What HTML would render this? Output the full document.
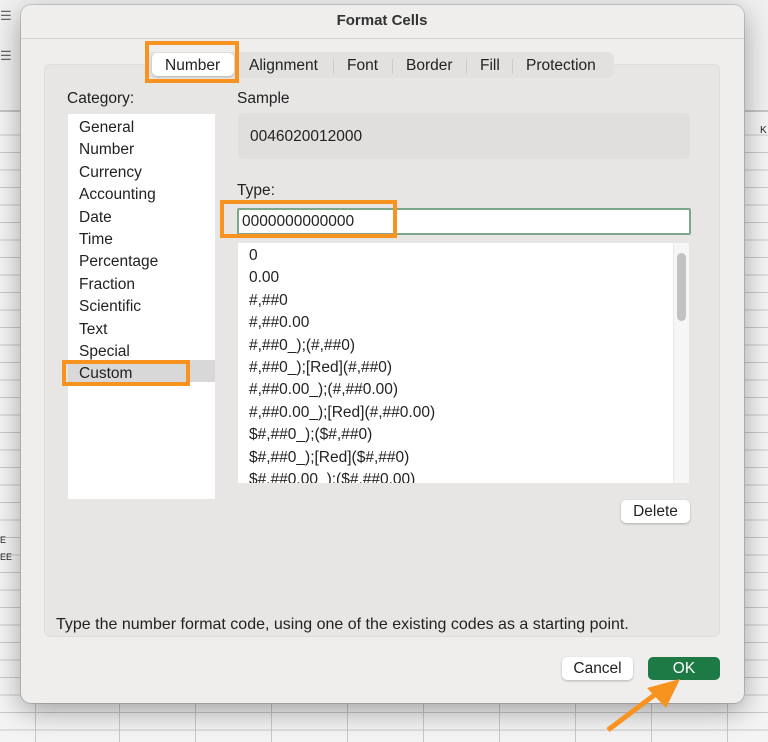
<!DOCTYPE html>
<html><head><meta charset="utf-8"><style>
*{box-sizing:border-box;margin:0;padding:0}
body{width:768px;height:742px;position:relative;overflow:hidden;font-family:"Liberation Sans",sans-serif;color:#222;
background-color:#f4f4f4;
background-image:repeating-linear-gradient(to bottom,transparent 0,transparent 16.5px,#c8c8c8 16.5px,#c8c8c8 17.5px),repeating-linear-gradient(to right,transparent 0,transparent 75px,#c8c8c8 75px,#c8c8c8 76px);
background-position:0 118px,44px 0}
.top{position:absolute;left:0;top:0;width:768px;height:112px;background:#f0f0f0;border-bottom:2px solid #c4c4c4}
.a{position:absolute}
.dlg{left:21px;top:5px;width:723px;height:698px;background:#efeeec;border-radius:10px;box-shadow:0 8px 28px rgba(0,0,0,.35),0 0 0 1px #cfcfcf}
.t{font-size:15.5px}
.ob{position:absolute;border:4px solid #f7931e}
</style></head><body>
<div class="top"></div>
<div class="a" style="left:0;top:8px;font-size:13px;color:#666">☰</div>
<div class="a" style="left:0;top:48px;font-size:13px;color:#666">☰</div>
<div class="a" style="left:0;top:535px;font-size:9px">E</div>
<div class="a" style="left:0;top:552px;font-size:9px">EE</div>
<div class="a" style="left:760px;top:125px;font-size:10px">K</div>
<div class="a dlg"></div>
<div class="a" style="left:21px;top:38px;width:723px;height:1px;background:#d4d3d1"></div>
<div class="a" style="left:0;top:12px;width:764px;text-align:center;font-size:15px;font-weight:bold;color:#333">Format Cells</div>
<div class="a" style="left:44px;top:64px;width:676px;height:573px;background:#e7e6e4;border-radius:6px;border:1px solid #dedddb"></div>
<div class="a" style="left:146px;top:52px;width:468px;height:26px;background:#e2e1df;border-radius:7px"></div>
<div class="a" style="left:152px;top:53px;width:82px;height:23px;background:#fff;border-radius:5px;box-shadow:0 1px 2px rgba(0,0,0,.2)"></div>
<div class="a t" style="left:165px;top:57px">Number</div>
<div class="a t" style="left:249px;top:57px">Alignment</div>
<div class="a" style="left:333px;top:59px;width:1px;height:15px;background:#ccc"></div>
<div class="a t" style="left:347px;top:57px">Font</div>
<div class="a" style="left:392px;top:59px;width:1px;height:15px;background:#ccc"></div>
<div class="a t" style="left:406px;top:57px">Border</div>
<div class="a" style="left:466px;top:59px;width:1px;height:15px;background:#ccc"></div>
<div class="a t" style="left:480px;top:57px">Fill</div>
<div class="a" style="left:512px;top:59px;width:1px;height:15px;background:#ccc"></div>
<div class="a t" style="left:526px;top:57px">Protection</div>
<div class="ob" style="left:145px;top:41px;width:94px;height:42px"></div>

<div class="a t" style="left:67px;top:90px">Category:</div>
<div class="a" style="left:68px;top:114px;width:147px;height:385px;background:#fff"></div>
<div class="a" style="left:68px;top:360px;width:147px;height:22px;background:#d8d8d8"></div>
<div class="a t" style="left:79px;top:117px;line-height:22.4px">General<br>Number<br>Currency<br>Accounting<br>Date<br>Time<br>Percentage<br>Fraction<br>Scientific<br>Text<br>Special<br>Custom</div>
<div class="ob" style="left:62px;top:360px;width:128px;height:26px"></div>

<div class="a t" style="left:237px;top:90px">Sample</div>
<div class="a" style="left:238px;top:113px;width:452px;height:46px;background:#e0dfdd;border-radius:5px"></div>
<div class="a t" style="left:250px;top:128px">0046020012000</div>
<div class="a t" style="left:237px;top:182px">Type:</div>
<div class="a" style="left:237px;top:208px;width:454px;height:27px;background:#fff;border:2px solid #7da98a;border-radius:2px"></div>
<div class="a t" style="left:242px;top:213px">0000000000000</div>
<div class="ob" style="left:220px;top:200px;width:177px;height:38px"></div>

<div class="a" style="left:238px;top:243px;width:451px;height:240px;background:#fff;overflow:hidden"></div>
<div class="a" style="left:673px;top:243px;width:16px;height:240px;background:#f6f6f6;border-left:1px solid #e8e8e8"></div>
<div class="a" style="left:677px;top:253px;width:9px;height:68px;background:#c2c2c2;border-radius:5px"></div>
<div class="a t" style="left:249px;top:245px;width:420px;height:238px;line-height:22.4px;overflow:hidden">0<br>0.00<br>#,##0<br>#,##0.00<br>#,##0_);(#,##0)<br>#,##0_);[Red](#,##0)<br>#,##0.00_);(#,##0.00)<br>#,##0.00_);[Red](#,##0.00)<br>$#,##0_);($#,##0)<br>$#,##0_);[Red]($#,##0)<br>$#,##0.00_);($#,##0.00)</div>

<div class="a t" style="left:621px;top:500px;width:69px;height:23px;background:#fff;border-radius:5px;box-shadow:0 1px 2px rgba(0,0,0,.25);text-align:center;line-height:23px">Delete</div>
<div class="a" style="left:56px;top:616px;font-size:16px">Type the number format code, using one of the existing codes as a starting point.</div>
<div class="a t" style="left:562px;top:657px;width:71px;height:23px;background:#fff;border-radius:5px;box-shadow:0 1px 2px rgba(0,0,0,.25);text-align:center;line-height:23px">Cancel</div>
<div class="a t" style="left:648px;top:657px;width:72px;height:23px;background:#1d7a45;color:#fff;border-radius:5px;text-align:center;line-height:23px">OK</div>
<svg class="a" style="left:0;top:0" width="768" height="742"><line x1="608" y1="730" x2="657" y2="693" stroke="#f7931e" stroke-width="5"/><polygon points="680,679 647,688 666,708" fill="#f7931e"/></svg>
</body></html>
